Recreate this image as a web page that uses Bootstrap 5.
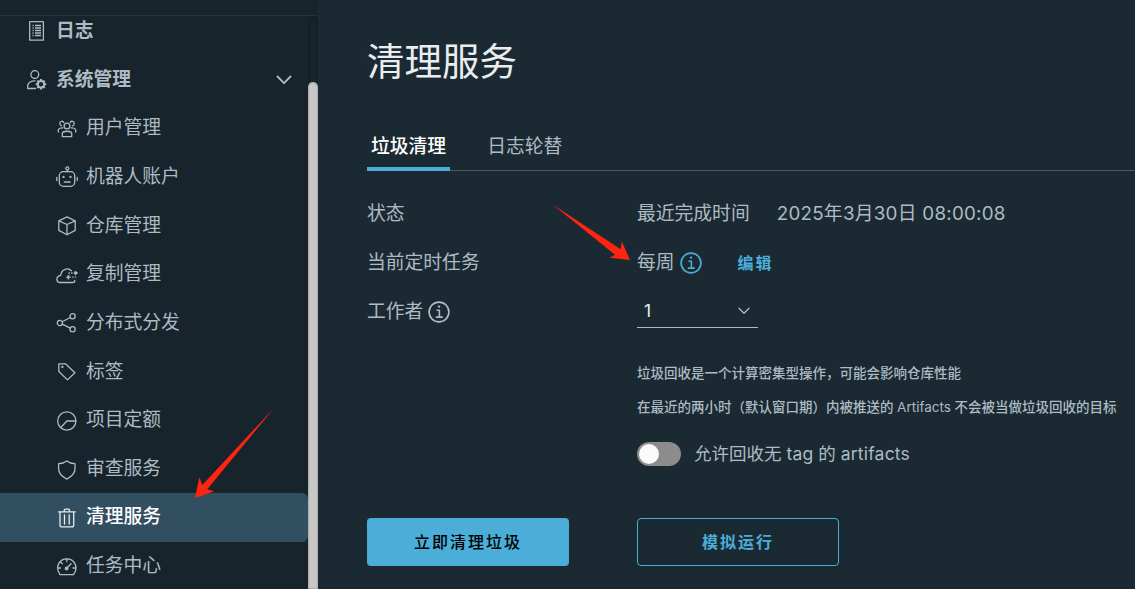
<!DOCTYPE html>
<html lang="zh-CN">
<head>
<meta charset="utf-8">
<meta name="viewport" content="width=device-width, initial-scale=1">
<title>清理服务</title>
<link href="https://cdn.jsdelivr.net/npm/bootstrap@5.3.0/dist/css/bootstrap.min.css" rel="stylesheet">
<style>
  body { background:#1b2a32; color:#adbbc4; font-family:Inter,"Noto Sans CJK SC",sans-serif; font-size:18.8px; line-height:24px; height:100vh; overflow:hidden; }
  svg { display:block; flex:none; }
  .ico { fill:none; stroke:currentColor; stroke-width:1.3; stroke-linejoin:round; stroke-linecap:round; }
  .side { width:318px; background:#17242b; flex:none; }
  .side-top { height:16px; border-bottom:1px solid #21333b; flex:none; }
  .side-list { margin-top:-10px; width:308px; }
  .side-row { height:48.7px; padding:1px 0 0 27px; color:#adbbc4; text-decoration:none; }
  .side-row .slot { width:20px; margin-right:9px; padding-top:1px; }
  .side-row.sub { padding-left:56px; }
  .side-row.sub .slot { width:22px; margin-right:8px; }
  .side-row.active { background:#324f62; color:#fff; border-radius:0 6px 6px 0; font-weight:500; padding-top:0; }
  .side-row.active .slot { color:#e6ecef; }
  .track { width:10px; border-radius:5px 5px 0 0; box-shadow:inset 0 0 3px #0e181d; padding-top:66px; }
  .thumb { background:#c8c8c8; border-radius:5px 5px 0 0; box-shadow:inset 0 0 2px #777; }
  .main-pane { padding-left:49px; }
  .page-title { font-size:37.5px; line-height:48px; margin:38px 0 0; font-weight:400; color:#eaedf0; }
  .tabs { margin-top:36px; height:49px; border-bottom:1px solid #495a63; gap:33px; }
  .tabs .nav-link { padding:13px 4px 0; height:49px; color:#adbbc4; }
  .tabs .nav-link.active { color:#fff; font-weight:500; border-bottom:4px solid #4aaed9; }
  .info-row { height:48.7px; }
  .info-row .word { padding-top:2px; }
  .lab { width:270px; flex:none; }
  .accent { color:#4aaed9; }
  .info-ico { margin:2px 0 0 5px; }
  .edit { font-size:16px; letter-spacing:2px; font-weight:700; margin-left:36px; padding-top:1px; }
  .date { margin-left:27px; letter-spacing:.25px; }
  .pick { width:121px; height:34px; border-bottom:1px solid #adbbc4; padding:1px 8px 0 7px; color:#eaedf0; font-size:17.5px; }
  .hint { font-size:13.5px; line-height:20px; white-space:nowrap; font-weight:500; }
  .latin { font-weight:400; }
  .switch { width:44px; height:24px; border-radius:12px; background:#8c8c8c; padding:2px; }
  .knob { width:20px; height:20px; border-radius:50%; background:#fafafa; }
  .allow { font-size:17.5px; }
  .allow .latin { letter-spacing:.2px; }
  .act { width:202px; height:48px; border-radius:4px; font-size:16px; letter-spacing:2px; font-weight:500; padding:0 0 1px; }
  .act-main { background:#4aaed9; color:#000; margin-right:68px; }
  .act-line { border-color:#4aaed9; color:#4aaed9; font-weight:600; }
  .marks { position:absolute; left:0; top:0; pointer-events:none; }
</style>
</head>
<body class="d-flex position-relative">
<aside class="side d-flex flex-column h-100">
  <div class="side-top"></div>
  <div class="d-flex flex-grow-1 overflow-hidden">
    <nav class="side-list flex-shrink-0">
      <a class="side-row d-flex align-items-center fw-bold"><span class="slot"><svg class="ico" width="20" height="20" viewBox="0 0 20 20"><path d="M2.700 .7h13.700v18.500H2.700z" /><path stroke-linecap="butt" d="M5.500 4.500h1.200M8 4.500h6M5.500 7h1.200M8 7h6M5.500 9.500h1.200M8 9.500h6M5.500 12h1.200M8 12h6M5.500 14.500h1.200M8 14.500h6"/></svg></span>日志</a>
      <a class="side-row d-flex align-items-center fw-bold"><span class="slot"><svg class="ico" width="20" height="20" viewBox="0 0 20 20"><circle cx="7.800" cy="4.600" r="3.900"/><path d="M8.500 18.500H.7v-3.200C1.500 12.500 4.500 10.800 8 10.800"/><circle cx="14" cy="14.300" r="3.200" stroke-width="2"/><path stroke-linecap="butt" stroke-width="2" d="M14 9v2M14 17.600v2M8.700 14.300h2M17.300 14.300h2M10.300 10.600l1.400 1.400M16.300 16.600l1.400 1.400M17.700 10.600l-1.400 1.400M11.700 16.600l-1.400 1.400"/></svg></span>系统管理
        <svg class="ico ms-auto" style="margin-right:16px" width="16" height="10" viewBox="0 0 16 10"><path stroke-width="1.800" d="M1.500 1.500L8 8.200l6.500-6.700"/></svg></a>
      <a class="side-row sub d-flex align-items-center"><span class="slot"><svg class="ico" width="22" height="22" viewBox="0 0 22 22"><circle cx="11" cy="8" r="2.900"/><path d="M6.300 18.700v-3.200c0-3 9.400-3 9.400 0v3.200zM7.800 4.500C7 2.500 3.500 3 3.800 5.800c.1 1 .6 1.700 1.500 2.100M14.200 4.500c.8-2 4.300-1.500 4 1.300-.1 1-.6 1.700-1.500 2.100M2.300 14v-2.200c.3-1.300 2-2 4.600-2M19.700 14v-2.200c-.3-1.300-2-2-4.600-2"/></svg></span>用户管理</a>
      <a class="side-row sub d-flex align-items-center"><span class="slot"><svg class="ico" width="22" height="22" viewBox="0 0 22 22"><rect x="3.300" y="5.700" width="15.400" height="14.600" rx="4"/><circle cx="11.300" cy="2.400" r="1.500"/><path d="M11.300 4v1.700M8.300 16h5.800M.8 11.500v3M21.200 11.500v3"/><circle cx="7.500" cy="11" r=".5"/><circle cx="14.500" cy="11" r=".5"/></svg></span>机器人账户</a>
      <a class="side-row sub d-flex align-items-center"><span class="slot"><svg class="ico" width="22" height="22" viewBox="0 0 22 22"><path d="M11 1.800l8.200 4v9.600L11 19.800l-8.200-4.400V5.800zM2.800 5.800L11 9.500l8.200-3.700M11 9.500v10.300"/></svg></span>仓库管理</a>
      <a class="side-row sub d-flex align-items-center"><span class="slot"><svg class="ico" width="22" height="22" viewBox="0 0 22 22"><path d="M18.800 16.500c0 1-.8 2-2 2H4.500C-.3 18.300-.4 12.300 4.700 11.300 5.500 4.800 12.300 3.400 15.300 6.800"/><path d="M18.800 9h2M19.300 7.400L21.200 9l-1.900 1.600M13.200 13.200h-2M12.800 11.500L11 13.200l1.800 1.700"/><path stroke-linecap="butt" stroke-dasharray="1.400 1.200" d="M12.500 9h6.500M13.500 13.200h6.500"/></svg></span>复制管理</a>
      <a class="side-row sub d-flex align-items-center"><span class="slot"><svg class="ico" width="22" height="22" viewBox="0 0 22 22"><circle cx="3.900" cy="11" r="2.600"/><circle cx="16.600" cy="4.300" r="2.600"/><circle cx="16.600" cy="17.200" r="2.600"/><path d="M6.200 9.800l8.100-4.300M6.200 12.100l8.100 4"/></svg></span>分布式分发</a>
      <a class="side-row sub d-flex align-items-center"><span class="slot"><svg class="ico" width="22" height="22" viewBox="0 0 22 22"><path d="M2.800 2.800h6.700l9.400 8.900-7.400 7.200-8.700-8.400z"/><circle cx="6.400" cy="6" r=".5"/></svg></span>标签</a>
      <a class="side-row sub d-flex align-items-center"><span class="slot"><svg class="ico" width="22" height="22" viewBox="0 0 22 22"><circle cx="10.800" cy="11" r="9.100"/><path d="M19.800 11h-9l-6 6.500"/></svg></span>项目定额</a>
      <a class="side-row sub d-flex align-items-center"><span class="slot"><svg class="ico" width="22" height="22" viewBox="0 0 22 22"><path d="M10.800 1.900C13 3.700 16 4.500 19 4.700v5.100c0 4.600-3.700 8-8.200 10.300C6.300 17.800 2.600 14.400 2.600 9.800V4.700c3-.2 6-1 8.200-2.800z"/></svg></span>审查服务</a>
      <a class="side-row sub active d-flex align-items-center"><span class="slot"><svg class="ico" width="22" height="22" viewBox="0 0 22 22"><path d="M2.500 4.800h16.800M4 5v13c0 1.400.5 1.900 1.900 1.900h9.900c1.400 0 1.900-.5 1.900-1.900V5M8.300 4.800V3.500c0-1 .3-1.300 1.300-1.300h2.600c1 0 1.300.3 1.300 1.300v1.300M8.500 8v9M13.200 8v9"/></svg></span>清理服务</a>
      <a class="side-row sub d-flex align-items-center"><span class="slot"><svg class="ico" width="22" height="22" viewBox="0 0 22 22"><path d="M4 18.600C-1.400 11 3.300 2.800 10.800 2.800S23 11 17.600 18.600zM10.800 3v2.700M2 12h2.500M17 12h2.700M4.700 6.300l1.700 1.500M10.800 12.300L15 7.700"/><circle cx="10.600" cy="12.500" r="1.300" fill="currentColor"/></svg></span>任务中心</a>
    </nav>
    <div class="track d-flex flex-column"><div class="thumb flex-grow-1"></div></div>
  </div>
</aside>

<main class="main-pane flex-grow-1">
  <h1 class="page-title">清理服务</h1>
  <div class="nav tabs flex-nowrap">
    <a class="nav-link active">垃圾清理</a>
    <a class="nav-link">日志轮替</a>
  </div>
  <section style="padding-top:18px">
    <div class="info-row d-flex align-items-center"><span class="lab word">状态</span><span class="word">最近完成时间</span><span class="date word">2025年3月30日 08:00:08</span></div>
    <div class="info-row d-flex align-items-center"><span class="lab word">当前定时任务</span><span class="word">每周</span>
      <svg class="ico accent info-ico" width="22" height="22" viewBox="0 0 22 22"><circle cx="11" cy="11" r="9.900" stroke-width="1.700"/><path stroke-width="1.600" stroke-linecap="butt" d="M8.500 9.200h2.900v6.900M7.800 16.100h7"/><circle cx="11" cy="5.600" r="1.200" fill="currentColor" stroke="none"/></svg>
      <a class="accent edit text-decoration-none">编辑</a></div>
    <div class="info-row d-flex align-items-center"><span class="lab d-flex align-items-center"><span class="word">工作者</span>
      <svg class="ico info-ico" width="22" height="22" viewBox="0 0 22 22"><circle cx="11" cy="11" r="9.900" stroke-width="1.700"/><path stroke-width="1.600" stroke-linecap="butt" d="M8.500 9.200h2.900v6.900M7.800 16.100h7"/><circle cx="11" cy="5.600" r="1.200" fill="currentColor" stroke="none"/></svg></span>
      <div class="pick d-flex align-items-center justify-content-between">1<svg class="ico" style="color:#adbbc4" width="12" height="8" viewBox="0 0 12 8"><path d="M1 1.300l5 5 5-5"/></svg></div></div>
  </section>
  <div style="padding:28px 0 0 270px">
    <div class="hint">垃圾回收是一个计算密集型操作，可能会影响仓库性能</div>
    <div class="hint" style="margin-top:14px">在最近的两小时（默认窗口期）内被推送的 <span class="latin">Artifacts</span> 不会被当做垃圾回收的目标</div>
    <div class="d-flex align-items-center" style="margin-top:25px;gap:13px"><span class="switch"><span class="knob d-block"></span></span><span class="allow">允许回收无 <span class="latin">tag</span> 的 <span class="latin">artifacts</span></span></div>
  </div>
  <div class="d-flex" style="margin-top:52px">
    <button class="btn act act-main">立即清理垃圾</button>
    <button class="btn act act-line">模拟运行</button>
  </div>
</main>
<svg class="marks" width="1135" height="589" viewBox="0 0 1135 589" fill="#ff2312"><path d="M195 498l4.300-20.700 3 7.700L274.300 407.700 207.300 489.300l7 2z"/><path d="M630 260l-8.300-18.700-1 8L552.300 204.300 615 254.700l-5.300 3z"/></svg>
</body>
</html>
